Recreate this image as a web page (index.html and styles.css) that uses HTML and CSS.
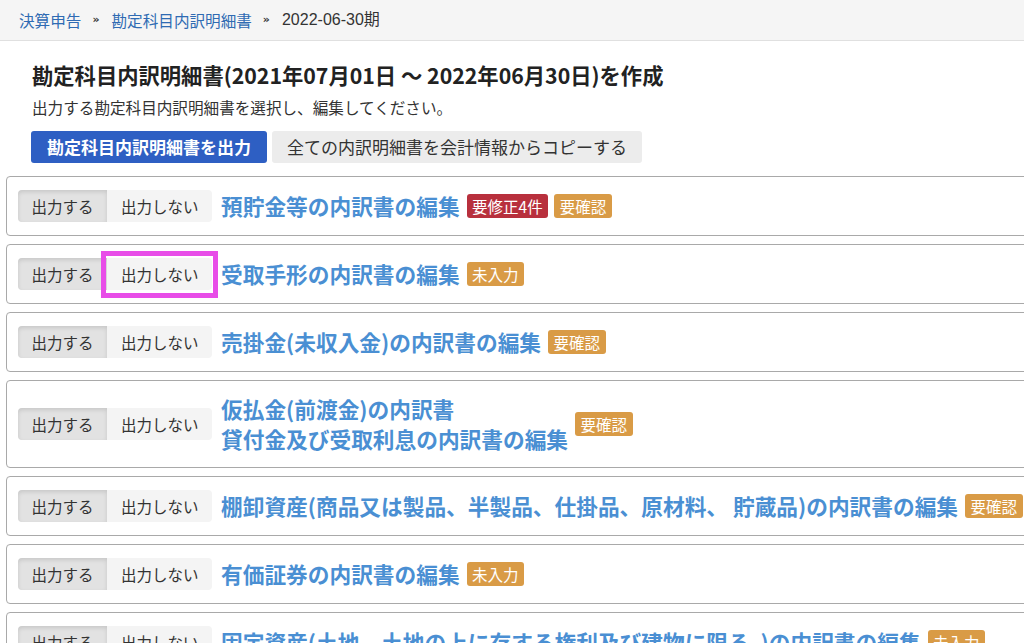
FILE: index.html
```html
<!DOCTYPE html>
<html lang="ja">
<head>
<meta charset="utf-8">
<title>勘定科目内訳明細書</title>
<link rel="stylesheet" href="styles.css">
</head>
<body>
<nav class="breadcrumb">
  <a class="crumb-link" href="#">決算申告</a>
  <span class="sep">»</span>
  <a class="crumb-link" href="#">勘定科目内訳明細書</a>
  <span class="sep">»</span>
  <span class="crumb-current">2022-06-30期</span>
</nav>
<main class="main">
  <section class="heading">
    <h1 class="title">勘定科目内訳明細書(2021年07月01日 ～ 2022年06月30日)を作成</h1>
    <p class="lead">出力する勘定科目内訳明細書を選択し、編集してください。</p>
    <div class="actions">
      <button class="btn btn-primary">勘定科目内訳明細書を出力</button>
      <button class="btn btn-default">全ての内訳明細書を会計情報からコピーする</button>
    </div>
  </section>
  <section class="cards">
    <div class="card">
      <div class="toggle"><span class="seg seg-on">出力する</span><span class="seg seg-off">出力しない</span></div>
      <a class="item-title" href="#">預貯金等の内訳書の編集</a>
      <span class="badges"><span class="badge badge-red">要修正4件</span><span class="badge badge-orange">要確認</span></span>
    </div>
    <div class="card">
      <div class="toggle"><span class="seg seg-on">出力する</span><span class="seg seg-off seg-marked">出力しない</span></div>
      <a class="item-title" href="#">受取手形の内訳書の編集</a>
      <span class="badges"><span class="badge badge-orange">未入力</span></span>
    </div>
    <div class="card">
      <div class="toggle"><span class="seg seg-on">出力する</span><span class="seg seg-off">出力しない</span></div>
      <a class="item-title" href="#">売掛金(未収入金)の内訳書の編集</a>
      <span class="badges"><span class="badge badge-orange">要確認</span></span>
    </div>
    <div class="card">
      <div class="toggle"><span class="seg seg-on">出力する</span><span class="seg seg-off">出力しない</span></div>
      <a class="item-title" href="#">仮払金(前渡金)の内訳書<br>貸付金及び受取利息の内訳書の編集</a>
      <span class="badges"><span class="badge badge-orange">要確認</span></span>
    </div>
    <div class="card">
      <div class="toggle"><span class="seg seg-on">出力する</span><span class="seg seg-off">出力しない</span></div>
      <a class="item-title" href="#">棚卸資産(商品又は製品、半製品、仕掛品、原材料、 貯蔵品)の内訳書の編集</a>
      <span class="badges"><span class="badge badge-orange">要確認</span></span>
    </div>
    <div class="card">
      <div class="toggle"><span class="seg seg-on">出力する</span><span class="seg seg-off">出力しない</span></div>
      <a class="item-title" href="#">有価証券の内訳書の編集</a>
      <span class="badges"><span class="badge badge-orange">未入力</span></span>
    </div>
    <div class="card">
      <div class="toggle"><span class="seg seg-on">出力する</span><span class="seg seg-off">出力しない</span></div>
      <a class="item-title" href="#">固定資産(土地、土地の上に存する権利及び建物に限る。)の内訳書の編集</a>
      <span class="badges"><span class="badge badge-orange">未入力</span></span>
    </div>
  </section>
</main>
</body>
</html>
```
FILE: styles.css
```css
html, body {
  margin: 0;
  padding: 0;
  overflow: hidden;
  background: #fff;
}
body {
  font-family: "Noto Sans CJK JP", "Liberation Sans", sans-serif;
  color: #333;
  width: 1024px;
}
a { text-decoration: none; }

.breadcrumb {
  height: 40px;
  background: #f5f5f5;
  border-bottom: 1px solid #e0e0e0;
  display: flex;
  align-items: center;
  padding-left: 19px;
  font-size: 15.6px;
  line-height: 20px;
}
.crumb-link { color: #2f6bb3; }
.sep {
  color: #333;
  font-family: "DejaVu Sans", sans-serif;
  font-size: 11px;
  font-weight: bold;
  margin: 0 12px 0 11px;
}
.crumb-current {
  color: #333;
  font-family: "Liberation Sans", "Noto Sans CJK JP", sans-serif;
  font-size: 16px;
}

.heading { padding-left: 32px; }
.title {
  margin: 20px 0 0;
  font-size: 21.3px;
  line-height: 28px;
  font-weight: bold;
  color: #222;
}
.lead {
  margin: 7px 0 0;
  font-size: 15.6px;
  line-height: 22px;
  color: #333;
}
.actions {
  display: flex;
  gap: 5px;
  margin: 13px 0 0 -1px;
}
.btn {
  height: 32px;
  border: none;
  border-radius: 3px;
  font-family: inherit;
  font-size: 17px;
  line-height: 32px;
  padding: 0 16px;
  cursor: pointer;
}
.btn-primary {
  background: #2e5fc3;
  color: #fff;
  font-weight: bold;
}
.btn-default {
  background: #ececec;
  color: #333;
  padding: 0 15px;
}

.cards {
  display: flex;
  flex-direction: column;
  gap: 8px;
  margin: 13px 0 0 6px;
  width: 1040px;
}
.card {
  border: 1px solid #a9a9a9;
  border-radius: 4px;
  padding: 13px 11px;
  display: flex;
  align-items: center;
  min-height: 32px;
  background: #fff;
}
.toggle {
  display: flex;
  flex: none;
  height: 32px;
  border-radius: 4px;
}
.seg {
  font-size: 15.5px;
  line-height: 32px;
  color: #333;
  white-space: nowrap;
}
.seg-on {
  background: #e2e2e2;
  box-shadow: inset 0 2px 4px rgba(0,0,0,0.12);
  padding: 0 13.5px;
  border-radius: 4px 0 0 4px;
}
.seg-off {
  background: #f4f4f4;
  padding: 0 13.5px 0 14px;
  border-radius: 0 4px 4px 0;
  position: relative;
}
.seg-marked::after {
  content: "";
  position: absolute;
  left: -6px;
  right: -6px;
  top: -7px;
  bottom: -8px;
  border: 5px solid #e84de8;
}
.item-title {
  margin-left: 9px;
  font-size: 21.7px;
  line-height: 30px;
  font-weight: bold;
  color: #4a8fd3;
  white-space: nowrap;
}
.badges {
  display: flex;
  gap: 6px;
  margin-left: 7px;
  flex: none;
}
.badge {
  height: 24px;
  line-height: 24px;
  font-size: 15.5px;
  padding: 0 5.5px;
  border-radius: 3px;
  color: #fff;
}
.badge-red { background: #b8303d; }
.badge-orange { background: #d99b46; }
```
